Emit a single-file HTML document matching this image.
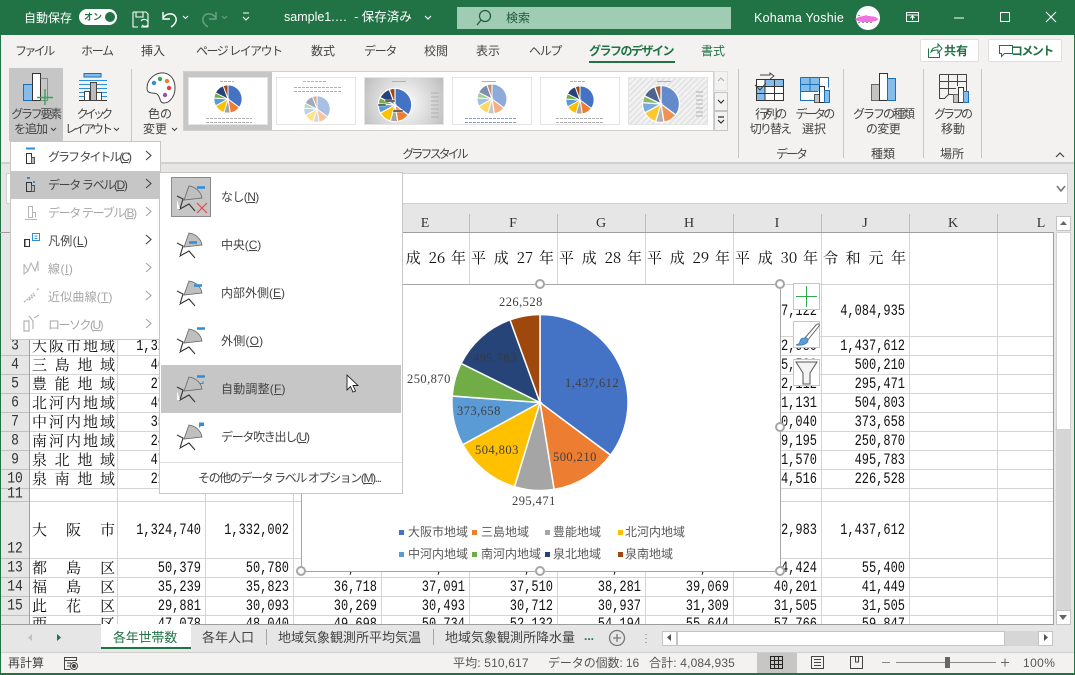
<!DOCTYPE html>
<html lang="ja"><head><meta charset="utf-8"><title>Excel</title>
<style>
html,body{margin:0;padding:0;width:1075px;height:675px;overflow:hidden;background:#e6e6e6}
body{position:relative;font-family:"Liberation Sans","Noto Sans CJK JP",sans-serif;font-size:12px;color:#444}
div,span,svg{position:absolute}
u,i,b{position:static}
.t{white-space:nowrap;line-height:16px;height:16px}
.c{transform:translateX(-50%);text-align:center}
.w{color:#fff}
.g{color:#a6a6a6}
.n{font-family:"Liberation Mono",monospace;font-size:12px;color:#111;width:84px;text-align:right;line-height:16px;height:16px;white-space:nowrap;transform:scaleY(1.32);transform-origin:50% 50%}
.j{font-family:"Noto Serif CJK SC","Noto Serif CJK JP",serif;font-size:15px;color:#111;line-height:18px;height:18px;width:83px;left:32px;text-align:justify;text-align-last:justify;white-space:nowrap;overflow:hidden}
.y{font-family:"Noto Serif CJK SC","Noto Serif CJK JP",serif;font-size:15px;color:#111;line-height:18px;height:18px;width:83px;top:249px;text-align-last:justify;white-space:nowrap}
.h{font-family:"Liberation Serif",serif;font-size:14px;color:#333;line-height:16px;height:16px;top:216px;width:88px;text-align:center}
.r{font-family:"Liberation Mono",monospace;font-size:13px;color:#333;line-height:16px;height:16px;left:1px;width:28px;text-align:center;transform:scaleY(1.2)}
.l{font-family:"Noto Sans CJK JP",sans-serif;color:#595959;font-size:12px;line-height:16px;height:16px;white-space:nowrap}
.d{font-family:"Liberation Serif",serif;font-size:12.5px;letter-spacing:.45px;color:#404040;line-height:14px;height:14px;white-space:nowrap}
.b{width:10px;height:10px;border-radius:50%;background:#fff;border:2px solid #a6a6a6;box-sizing:border-box}
.q{background:#fff;border:1px solid #c4c4c4;box-sizing:border-box}
.th{background:#fff;border:1px solid #e4e4e4;box-sizing:border-box;width:80px;height:48px;top:77px}
</style></head><body>

<!-- chrome backgrounds -->
<div style="left:0;top:0;width:1075px;height:35px;background:#217346"></div>
<div style="left:0;top:35px;width:1075px;height:127px;background:#f3f2f1"></div>
<div style="left:0;top:162px;width:1075px;height:2px;background:#d2d0ce"></div>
<div style="left:0;top:164px;width:1075px;height:50px;background:#e6e6e6"></div>
<div style="left:0;top:35px;width:1px;height:640px;background:#217346"></div>
<div style="left:1074px;top:35px;width:1px;height:640px;background:#217346"></div>
<div style="left:0;top:673px;width:1075px;height:2px;background:#217346"></div>

<!-- formula bar -->
<div style="left:6px;top:173px;width:1062px;height:31px;background:#fff;border:1px solid #d0d0d0;box-sizing:border-box"></div>
<svg style="left:1056px;top:185px" width="10" height="8"><path d="M1 1L5 6L9 1" fill="none" stroke="#777" stroke-width="1.6"/></svg>

<!-- title bar -->
<span class="t w" style="left:24px;top:10px">自動保存</span>
<div style="left:79px;top:9px;width:38px;height:16px;background:#fff;border-radius:8px"></div>
<span class="t" style="left:84px;top:9px;font-size:9px;color:#217346;font-weight:bold">オン</span>
<div style="left:105px;top:12px;width:10px;height:10px;background:#217346;border-radius:50%"></div>
<span class="t w" style="left:284px;top:9px;font-size:12.5px">sample1.…&nbsp; - 保存済み</span>
<div style="left:457px;top:7px;width:274px;height:22px;background:#a0ccb4"></div>
<span class="t" style="left:506px;top:10px;color:#1c5c3a">検索</span>
<span class="t w" style="left:754px;top:10px;font-size:12.5px;letter-spacing:.25px">Kohama Yoshie</span>
<svg style="left:0;top:0" width="1075" height="35" fill="none" stroke="#fff">
<path d="M425 16l3 3 3-3" stroke-width="1.2"/>
<!-- save -->
<path d="M133 12h13l2 2v13h-7M133 12v15h5M136 12v5h7v-5" stroke-width="1.1"/><path d="M141 21a4 4 0 0 1 7 1M148 25a4 4 0 0 1-6 0" stroke-width="1.1"/>
<!-- undo -->
<path d="M163 12v7h7M163 18c3-5 11-6 13 0 1 4-2 7-5 9" stroke-width="1.4"/><path d="M183 16l2.500 2.500 2.500-2.500" stroke-width="1.1"/>
<!-- redo -->
<path d="M216 12v7h-7M216 18c-3-5-11-6-13 0-1 4 2 7 5 9" stroke="#6ba285" stroke-width="1.4"/><path d="M222 16l2.500 2.500 2.500-2.500" stroke="#6ba285" stroke-width="1.1"/>
<!-- qat -->
<path d="M243 13h6M243 17l3 3 3-3" stroke-width="1.1"/>
<!-- search -->
<circle cx="485" cy="16" r="5.500" stroke="#1c5c3a" stroke-width="1.2"/><path d="M481 20l-4 5" stroke="#1c5c3a" stroke-width="1.3"/>
<!-- window -->
<rect x="906.500" y="12.500" width="12" height="9"/><path d="M907 15h11M912.500 20v-4M910.500 18l2-2 2 2"/>
<path d="M954 18h10"/><rect x="1000.500" y="12.500" width="9" height="9"/><path d="M1046 12l10 10M1056 12l-10 10" stroke-width="1.1"/>
<circle cx="868" cy="18" r="12" fill="#fff" stroke="none"/>
<path d="M855 19c3-2 6-3 9-3l2-1 2 1c4 0 9 1 10 3 0 2-6 3-11 3-5 0-10 0-12-3z" fill="#f070e0" stroke="none"/>
<path d="M858 15.500h4M858 22.500h16" stroke="#222" stroke-width=".6" stroke-dasharray="2 2"/>
</svg>

<!-- tabs -->
<span class="t" style="left:15px;top:43px;letter-spacing:-2.600px">ファイル</span>
<span class="t" style="left:81px;top:43px;letter-spacing:-1.300px">ホーム</span>
<span class="t" style="left:141px;top:43px">挿入</span>
<span class="t" style="left:196px;top:43px;letter-spacing:-1.500px">ページ レイアウト</span>
<span class="t" style="left:311px;top:43px">数式</span>
<span class="t" style="left:364px;top:43px;letter-spacing:-1.300px">データ</span>
<span class="t" style="left:424px;top:43px">校閲</span>
<span class="t" style="left:476px;top:43px">表示</span>
<span class="t" style="left:529px;top:43px;letter-spacing:-1.300px">ヘルプ</span>
<span class="t" style="left:589px;top:43px;color:#217346;font-weight:bold;letter-spacing:-1.500px">グラフのデザイン</span>
<div style="left:589px;top:61px;width:86px;height:2px;background:#217346"></div>
<span class="t" style="left:701px;top:43px;color:#217346">書式</span>
<div style="left:920px;top:39px;width:59px;height:23px;background:#fff;border:1px solid #e1dfdd;box-sizing:border-box;border-radius:2px"></div>
<div style="left:988px;top:39px;width:74px;height:23px;background:#fff;border:1px solid #e1dfdd;box-sizing:border-box;border-radius:2px"></div>
<span class="t" style="left:944px;top:43px;color:#217346;font-weight:bold">共有</span>
<span class="t" style="left:1011px;top:43px;color:#217346;font-weight:bold;letter-spacing:-1.600px">コメント</span>
<svg style="left:925px;top:42px" width="130" height="18" fill="none" stroke="#217346"><path d="M3.500 6.500v9h11v-5M6 10c1-4 4-5 7-5V2l4 4.500-4 4.500V8c-3 0-5 0-7 2z"/><path d="M74.500 3.500h13v8h-8l-3 3v-3h-2z"/></svg>

<!-- ribbon group lines -->
<div style="left:131px;top:69px;width:1px;height:73px;background:#c8c6c4"></div>
<div style="left:738px;top:69px;width:1px;height:89px;background:#c8c6c4"></div>
<div style="left:843px;top:69px;width:1px;height:89px;background:#c8c6c4"></div>
<div style="left:923px;top:69px;width:1px;height:89px;background:#c8c6c4"></div>
<div style="left:981px;top:69px;width:1px;height:89px;background:#c8c6c4"></div>

<div style="left:9px;top:68px;width:54px;height:73px;background:#c6c6c6"></div>
<!-- ribbon labels -->
<span class="t c" style="left:35.500px;top:106px;letter-spacing:-2.300px">グラフ要素</span>
<span class="t" style="left:14px;top:121px;letter-spacing:-1px">を追加</span>
<span class="t c" style="left:93px;top:106px;letter-spacing:-3.800px">クイック</span>
<span class="t" style="left:65px;top:121px;letter-spacing:-3px">レイアウト</span>
<span class="t c" style="left:160px;top:106px">色の</span>
<span class="t" style="left:143px;top:121px">変更</span>
<span class="t c" style="left:434px;top:146px;letter-spacing:-3px">グラフ スタイル</span>
<span class="t c" style="left:770px;top:106px;letter-spacing:-2.400px">行/列の</span>
<span class="t c" style="left:770px;top:121px;letter-spacing:-1.900px">切り替え</span>
<span class="t c" style="left:814px;top:106px;letter-spacing:-2.700px">データの</span>
<span class="t c" style="left:814px;top:121px">選択</span>
<span class="t c" style="left:883px;top:106px;letter-spacing:-2px">グラフの種類</span>
<span class="t c" style="left:883px;top:121px;letter-spacing:-.6px">の変更</span>
<span class="t c" style="left:952px;top:106px;letter-spacing:-3px">グラフの</span>
<span class="t c" style="left:953px;top:121px">移動</span>
<span class="t c" style="left:791px;top:146px;letter-spacing:-2px">データ</span>
<span class="t c" style="left:883px;top:146px">種類</span>
<span class="t c" style="left:952px;top:146px">場所</span>

<!-- gallery -->
<div style="left:183px;top:71px;width:531px;height:60px;background:#fff;border:1px solid #d2d0ce;box-sizing:border-box"></div>
<div style="left:184px;top:72px;width:88px;height:58px;background:#c6c6c6"></div>
<div class="th" style="left:188px"></div>
<div class="th" style="left:276px"></div>
<div class="th" style="left:364px;background:radial-gradient(circle at 50% 55%,#fff,#bdbdbd)"></div>
<div class="th" style="left:452px"></div>
<div class="th" style="left:540px"></div>
<div class="th" style="left:628px;background:repeating-linear-gradient(135deg,#e4e4e4 0 2px,#f3f3f3 2px 4px)"></div>
<div class="q" style="left:714px;top:71px;width:14px;height:20px;background:#f3f2f1;border-color:#e1dfdd"></div>
<div class="q" style="left:714px;top:92px;width:14px;height:19px;background:#f3f2f1"></div>
<div class="q" style="left:714px;top:111px;width:14px;height:20px;background:#f3f2f1"></div>

<svg style="left:0;top:64px" width="1075" height="100" viewBox="0 64 1075 100" fill="none">
<defs>
<g id="pie" stroke="#fff" stroke-width="6">
<path d="M0 0V-88A88 88 0 0 1 70.560 52.590Z" fill="#4472c4"/>
<path d="M0 0L70.560 52.590A88 88 0 0 1 14.100 86.900Z" fill="#ed7d31"/>
<path d="M0 0L14.100 86.900A88 88 0 0 1-25.500 84.200Z" fill="#a5a5a5"/>
<path d="M0 0L-25.500 84.200A88 88 0 0 1-77.200 42.200Z" fill="#ffc000"/>
<path d="M0 0L-77.200 42.200A88 88 0 0 1-87.800-6.500Z" fill="#5b9bd5"/>
<path d="M0 0L-87.800-6.500A88 88 0 0 1-78.900-39.100Z" fill="#70ad47"/>
<path d="M0 0L-78.900-39.100A88 88 0 0 1-30-82.700Z" fill="#264478"/>
<path d="M0 0L-30-82.700A88 88 0 0 1 0-88Z" fill="#9e480e"/>
</g>
</defs>
<!-- ribbon icons -->
<path d="M23.500 84.500h9v16h-9z" fill="#85bcec" stroke="#1a6fb5"/>
<path d="M32.500 73.500h8v27h-8z" fill="#fff" stroke="#333"/>
<path d="M40.500 78.500h7v22h-7" stroke="#888"/>
<path d="M37 97.500h16M45 89v16" stroke="#33a852" stroke-width="1.400"/>
<path d="M84 73.500h17v3.500h-17z" fill="#85bcec" stroke="#1a6fb5"/>
<path d="M79 80.500h28M79 84.500h28M79 88.500h28M79 92.500h28M79 96.500h28" stroke="#2e8fd8"/>
<path d="M79 100.500h28" stroke="#333"/><path d="M84.500 91.500h5v9h-5z" fill="#fff" stroke="#444"/><path d="M90.500 82.500h6v18h-6z" fill="#bbb" stroke="#444"/><path d="M96.500 92.500h5v8h-5z" fill="#fff" stroke="#444"/>
<path d="M147 88c0-10 10-16 17-15 7 1 11 7 11 15 0 8-5 15-11 15-5 0-3-6-7-9-3-2-10 1-10-6z" fill="#fff" stroke="#444"/>
<circle cx="154" cy="83" r="2.200" fill="#2e8fd8"/><circle cx="160" cy="79" r="2.200" fill="#33a852"/><circle cx="167" cy="81" r="2.200" fill="#ed7d31"/><circle cx="169" cy="88" r="2.200" fill="#e04040"/><circle cx="165" cy="95" r="2.200" fill="#9a4fa8"/>
<!-- data icons -->
<path d="M756.500 79.500h27v21h-27z" fill="#fff"/><path d="M756.500 86.500h8v7h-8zM756.500 93.500h8v7h-8zM764.500 79.500h19v7h-19z" fill="#85bcec"/>
<path d="M756.500 79.500h27v21h-27zM756 86.500h28M756 93.500h28M765 79v22M774.500 79v22" stroke="#333"/>
<path d="M755 85l5 5 6-7M760 75h10v-2l4 3-4 3" stroke="#444"/>
<path d="M800.500 77.500h28v14h-10v9h-18z" fill="#fff"/><path d="M800.500 77.500h19v14h-19z" fill="#85bcec"/>
<path d="M800.500 77.500h28v10M800.500 77.500v23h18M800 84.500h20M800 91.500h18M810 77v14M819.500 77v9" stroke="#1a6fb5"/>
<path d="M814.500 94.500h6v8h-6z" fill="#c4c4c4" stroke="#555"/><path d="M819.500 86.500h5v16h-5z" fill="#fff" stroke="#333"/><path d="M824.500 90.500h5v12h-5z" fill="#85bcec" stroke="#1a6fb5"/>
<path d="M871.500 84.500h8v16h-8z" fill="#c4c4c4" stroke="#666"/><path d="M879.500 73.500h8v27h-8z" fill="#fff" stroke="#333"/><path d="M887.500 78.500h8v22h-8z" fill="#85bcec" stroke="#1a6fb5"/>
<path d="M939.500 74.500h27v20h-10M939.500 74.500v24h5l4-4h6M939 81.500h27M939 88.500h17M948.500 74v20M957.500 74v12" stroke="#444"/>
<path d="M953.500 94.500h6v8h-6z" fill="#c4c4c4" stroke="#666"/><path d="M958.500 87.500h5v15h-5z" fill="#fff" stroke="#333"/><path d="M963.500 91.500h5v11h-5z" fill="#85bcec" stroke="#1a6fb5"/>
<!-- carets -->
<path d="M51 128l2.500 2.500 2.500-2.500M114 128l2.500 2.500 2.500-2.500M172 128l2.500 2.500 2.500-2.500" stroke="#444"/>
<path d="M718 81l3-3 3 3" stroke="#b0b0b0" stroke-width="1.200"/><path d="M718 100l3 3 3-3" stroke="#333" stroke-width="1.200"/><path d="M718 117h6M718 120l3 3 3-3" stroke="#333" stroke-width="1.200"/>
<path d="M1056 157l4-4 4 4" stroke="#444" stroke-width="1.200"/>
<!-- thumbnails -->
<use href="#pie" transform="translate(228,99) scale(.16)"/>
<use href="#pie" transform="translate(317,109) scale(.15)"/><circle cx="317" cy="109" r="13.500" fill="#fff" opacity=".55"/>
<use href="#pie" transform="translate(395,105) scale(.19)"/>
<use href="#pie" transform="translate(492,99) scale(.17)" opacity=".6"/>
<use href="#pie" transform="translate(580,100) scale(.16)"/>
<use href="#pie" transform="translate(661,104) scale(.21)" opacity=".8"/>
<g stroke="#b0b0b0" stroke-width="1">
<path d="M220 81.500h14M206 118.500h46M206 122.500h46" stroke-dasharray="3 1"/>
<path d="M303 81.500h24M294 87.500h48M294 91.500h48" stroke-dasharray="3 1"/>
<path d="M392 81.500h14M431 93h8M431 97h8M431 101h8M431 105h8M431 109h8M431 113h8M431 117h8"/>
<path d="M482 81.500h14"/><path d="M465 118.500h52M465 122.500h52" stroke="#8a9ac0" stroke-dasharray="3 1"/>
<path d="M570 81.500h16M556 118.500h48M556 122.500h48" stroke-dasharray="3 1"/>
<path d="M657 81.500h14M696 92h7M696 96h7M696 100h7M696 104h7M696 108h7M696 112h7M696 116h7"/>
</g>
<path d="M385 100h10v2h-10zM393 110h10v2h-10zM378 104h8v2h-8z" fill="#333" stroke="#fff" stroke-width=".5"/>
</svg>

<!-- column headers -->
<div style="left:1px;top:214px;width:1052px;height:19px;background:#e6e6e6"></div>
<span class="h" style="left:381px">E</span><span class="h" style="left:469px">F</span><span class="h" style="left:557px">G</span><span class="h" style="left:645px">H</span><span class="h" style="left:733px">I</span><span class="h" style="left:821px">J</span><span class="h" style="left:909px">K</span><span class="h" style="left:997px">L</span>

<!-- sheet -->
<div style="left:30px;top:233px;width:1023px;height:391px;background:#fff"></div>
<div style="left:1px;top:233px;width:29px;height:391px;background:#e6e6e6"></div>
<svg style="left:0;top:214px" width="1075" height="411" viewBox="0 214 1075 411" fill="none">
<path d="M117.500 233V624M205.500 233V624M293.500 233V624M381.500 233V624M469.500 233V624M557.500 233V624M645.500 233V624M733.500 233V624M821.500 233V624M909.500 233V624M997.500 233V624M30 284.500H1053M30 336.500H1053M30 355.500H1053M30 374.500H1053M30 393.500H1053M30 412.500H1053M30 431.500H1053M30 450.500H1053M30 469.500H1053M30 488.500H1053M30 501.500H1053M30 558.500H1053M30 577.500H1053M30 596.500H1053M30 615.500H1053" stroke="#d4d4d4"/>
<path d="M1 355.500H29M1 374.500H29M1 393.500H29M1 412.500H29M1 431.500H29M1 450.500H29M1 469.500H29M1 488.500H29M1 501.500H29M1 558.500H29M1 577.500H29M1 596.500H29M1 615.500H29" stroke="#c0c0c0"/>
<path d="M381.500 214V232M469.500 214V232M557.500 214V232M645.500 214V232M733.500 214V232M821.500 214V232M909.500 214V232M997.500 214V232" stroke="#bdbdbd"/>
<path d="M0 232.500H1053.500V624M29.500 232V624M1 624.500H1054" stroke="#9e9e9e"/>
</svg>
<span class="y" style="left:383px">平 成 26 年</span><span class="y" style="left:471px">平 成 27 年</span><span class="y" style="left:559px">平 成 28 年</span><span class="y" style="left:647px">平 成 29 年</span><span class="y" style="left:735px">平 成 30 年</span><span class="y" style="left:823px">令 和 元 年</span>

<span class="r" style="top:338px">3</span><span class="r" style="top:357px">4</span><span class="r" style="top:376px">5</span><span class="r" style="top:395px">6</span><span class="r" style="top:414px">7</span><span class="r" style="top:433px">8</span><span class="r" style="top:452px">9</span><span class="r" style="top:471px">10</span>
<span class="r" style="top:487px;height:14px;line-height:14px;overflow:hidden">11</span><span class="r" style="top:541px">12</span><span class="r" style="top:560px">13</span><span class="r" style="top:579px">14</span><span class="r" style="top:598px">15</span>

<span class="j" style="top:337px">大阪市地域</span><span class="j" style="top:356px">三 島 地 域</span><span class="j" style="top:375px">豊 能 地 域</span><span class="j" style="top:394px">北河内地域</span><span class="j" style="top:413px">中河内地域</span><span class="j" style="top:432px">南河内地域</span><span class="j" style="top:451px">泉 北 地 域</span><span class="j" style="top:470px">泉 南 地 域</span>
<span class="j" style="top:521px">大 阪 市</span><span class="j" style="top:559px">都 島 区</span><span class="j" style="top:578px">福 島 区</span><span class="j" style="top:597px">此 花 区</span>

<span class="n" style="left:117px;top:338px">1,324,740</span><span class="n" style="left:117px;top:357px">464,000</span><span class="n" style="left:117px;top:376px">275,000</span><span class="n" style="left:117px;top:395px">495,000</span><span class="n" style="left:117px;top:414px">358,000</span><span class="n" style="left:117px;top:433px">244,000</span><span class="n" style="left:117px;top:452px">472,000</span><span class="n" style="left:117px;top:471px">218,000</span>
<span class="n" style="left:117px;top:522px">1,324,740</span><span class="n" style="left:205px;top:522px">1,332,002</span>
<span class="n" style="left:117px;top:560px">50,379</span><span class="n" style="left:205px;top:560px">50,780</span><span class="n" style="left:293px;top:560px">51,065</span><span class="n" style="left:381px;top:560px">51,278</span><span class="n" style="left:469px;top:560px">51,903</span><span class="n" style="left:557px;top:560px">52,711</span><span class="n" style="left:645px;top:560px">53,756</span><span class="n" style="left:733px;top:560px">54,424</span><span class="n" style="left:821px;top:560px">55,400</span>
<span class="n" style="left:117px;top:579px">35,239</span><span class="n" style="left:205px;top:579px">35,823</span><span class="n" style="left:293px;top:579px">36,718</span><span class="n" style="left:381px;top:579px">37,091</span><span class="n" style="left:469px;top:579px">37,510</span><span class="n" style="left:557px;top:579px">38,281</span><span class="n" style="left:645px;top:579px">39,069</span><span class="n" style="left:733px;top:579px">40,201</span><span class="n" style="left:821px;top:579px">41,449</span>
<span class="n" style="left:117px;top:598px">29,881</span><span class="n" style="left:205px;top:598px">30,093</span><span class="n" style="left:293px;top:598px">30,269</span><span class="n" style="left:381px;top:598px">30,493</span><span class="n" style="left:469px;top:598px">30,712</span><span class="n" style="left:557px;top:598px">30,937</span><span class="n" style="left:645px;top:598px">31,309</span><span class="n" style="left:733px;top:598px">31,505</span><span class="n" style="left:821px;top:598px">31,505</span>
<span class="n" style="left:733px;top:303px">3,977,122</span><span class="n" style="left:821px;top:303px">4,084,935</span>
<span class="n" style="left:733px;top:338px">1,422,980</span><span class="n" style="left:821px;top:338px">1,437,612</span>
<span class="n" style="left:733px;top:357px">495,530</span><span class="n" style="left:821px;top:357px">500,210</span>
<span class="n" style="left:733px;top:376px">292,112</span><span class="n" style="left:821px;top:376px">295,471</span>
<span class="n" style="left:733px;top:395px">501,131</span><span class="n" style="left:821px;top:395px">504,803</span>
<span class="n" style="left:733px;top:414px">370,040</span><span class="n" style="left:821px;top:414px">373,658</span>
<span class="n" style="left:733px;top:433px">249,195</span><span class="n" style="left:821px;top:433px">250,870</span>
<span class="n" style="left:733px;top:452px">491,570</span><span class="n" style="left:821px;top:452px">495,783</span>
<span class="n" style="left:733px;top:471px">224,516</span><span class="n" style="left:821px;top:471px">226,528</span>
<span class="n" style="left:733px;top:522px">1,422,983</span><span class="n" style="left:821px;top:522px">1,437,612</span>

<!-- partial row 16 -->
<div style="left:1px;top:616px;width:1052px;height:8px;overflow:hidden">
<span class="j" style="top:-1px;left:31px">西 　 区</span>
<span class="n" style="left:116px;top:0">47,078</span><span class="n" style="left:204px;top:0">48,040</span><span class="n" style="left:292px;top:0">49,698</span><span class="n" style="left:380px;top:0">50,734</span><span class="n" style="left:468px;top:0">52,132</span><span class="n" style="left:556px;top:0">54,194</span><span class="n" style="left:644px;top:0">55,644</span><span class="n" style="left:732px;top:0">57,766</span><span class="n" style="left:820px;top:0">59,847</span>
</div>

<!-- v scrollbar -->
<div style="left:1054px;top:214px;width:20px;height:411px;background:#e6e6e6"></div>
<div style="left:1056px;top:232px;width:15px;height:198px;background:#fff;border:1px solid #d0d0d0;box-sizing:border-box"></div>
<div style="left:1056px;top:430px;width:15px;height:180px;background:#d6d6d6"></div>
<div class="q" style="left:1056px;top:216px;width:15px;height:15px"></div>
<div class="q" style="left:1056px;top:610px;width:15px;height:15px"></div>
<svg style="left:1056px;top:216px" width="15" height="409"><path d="M4 9l3.500-4 3.500 4zM3 399h8l-4 5z" fill="#666"/></svg>

<!-- chart -->
<div style="left:301px;top:284px;width:480px;height:288px;background:#fff;border:1px solid #a6a6a6;box-sizing:border-box"></div>
<svg style="left:440px;top:302px" width="200" height="200" viewBox="-100 -100.500 200 200">
<g stroke="#fff" stroke-width="1.500">
<path d="M0 0V-88A88 88 0 0 1 70.560 52.590Z" fill="#4472c4"/>
<path d="M0 0L70.560 52.590A88 88 0 0 1 14.100 86.900Z" fill="#ed7d31"/>
<path d="M0 0L14.100 86.900A88 88 0 0 1-25.500 84.200Z" fill="#a5a5a5"/>
<path d="M0 0L-25.500 84.200A88 88 0 0 1-77.200 42.200Z" fill="#ffc000"/>
<path d="M0 0L-77.200 42.200A88 88 0 0 1-87.800-6.500Z" fill="#5b9bd5"/>
<path d="M0 0L-87.800-6.500A88 88 0 0 1-78.900-39.100Z" fill="#70ad47"/>
<path d="M0 0L-78.900-39.100A88 88 0 0 1-30-82.700Z" fill="#264478"/>
<path d="M0 0L-30-82.700A88 88 0 0 1 0-88Z" fill="#9e480e"/>
</g></svg>
<span class="d" style="left:499px;top:295px">226,528</span>
<span class="d" style="left:565px;top:376px">1,437,612</span>
<span class="d" style="left:473px;top:351px;color:#3a3a3a">495,783</span>
<span class="d" style="left:407px;top:372px">250,870</span>
<span class="d" style="left:457px;top:404px">373,658</span>
<span class="d" style="left:475px;top:443px">504,803</span>
<span class="d" style="left:553px;top:450px">500,210</span>
<span class="d" style="left:512px;top:494px">295,471</span>
<div style="left:399px;top:530px;width:5px;height:5px;background:#4472c4"></div><span class="l" style="left:408px;top:524px">大阪市地域</span>
<div style="left:472px;top:530px;width:5px;height:5px;background:#ed7d31"></div><span class="l" style="left:481px;top:524px">三島地域</span>
<div style="left:545px;top:530px;width:5px;height:5px;background:#a5a5a5"></div><span class="l" style="left:553px;top:524px">豊能地域</span>
<div style="left:618px;top:530px;width:5px;height:5px;background:#ffc000"></div><span class="l" style="left:625px;top:524px">北河内地域</span>
<div style="left:399px;top:552px;width:5px;height:5px;background:#5b9bd5"></div><span class="l" style="left:408px;top:546px">中河内地域</span>
<div style="left:472px;top:552px;width:5px;height:5px;background:#70ad47"></div><span class="l" style="left:481px;top:546px">南河内地域</span>
<div style="left:545px;top:552px;width:5px;height:5px;background:#264478"></div><span class="l" style="left:553px;top:546px">泉北地域</span>
<div style="left:618px;top:552px;width:5px;height:5px;background:#9e480e"></div><span class="l" style="left:625px;top:546px">泉南地域</span>
<div class="b" style="left:535px;top:279px"></div><div class="b" style="left:775px;top:279px"></div><div class="b" style="left:775px;top:422px"></div><div class="b" style="left:296px;top:566px"></div><div class="b" style="left:535px;top:566px"></div><div class="b" style="left:775px;top:566px"></div>
<div class="q" style="left:793px;top:283px;width:27px;height:27px"></div>
<div class="q" style="left:793px;top:321px;width:27px;height:27px"></div>
<div class="q" style="left:793px;top:359px;width:27px;height:27px"></div>
<svg style="left:793px;top:283px" width="27" height="103" fill="none"><path d="M3 13.500h21M13.500 3v21" stroke="#33a852"/>
<path d="M11 56L23 42c2-2 4-1 3 1L14 58z" fill="#fff" stroke="#666"/><path d="M11 55c3-1 4 1 4 3-1 3-6 5-12 4 3-1 4-2 4-4 0-2 2-3 4-3z" fill="#5b9bd5" stroke="#2e75b6" stroke-width=".7"/>
<path d="M3 80h21l-7 11v11h-7V91z" fill="#f3f3f3" stroke="#555" transform="translate(0,-1)"/></svg>

<!-- sheet tabs -->
<div style="left:1px;top:625px;width:1073px;height:27px;background:#e6e6e6"></div>
<div style="left:101px;top:624px;width:90px;height:25px;background:#fff;border-bottom:2px solid #217346;box-sizing:border-box"></div>
<span class="t" style="left:113px;top:630px;color:#217346;font-size:13px;letter-spacing:-.2px">各年世帯数</span>
<span class="t" style="left:202px;top:630px;font-size:13px">各年人口</span>
<div style="left:266px;top:629px;width:1px;height:16px;background:#a6a6a6"></div>
<span class="t" style="left:278px;top:630px;font-size:13px">地域気象観測所平均気温</span>
<div style="left:433px;top:629px;width:1px;height:16px;background:#a6a6a6"></div>
<span class="t" style="left:445px;top:630px;font-size:13px">地域気象観測所降水量</span>
<div style="left:576px;top:625px;width:8px;height:24px;background:#e6e6e6"></div>
<span class="t" style="left:584px;top:628px;color:#217346;font-weight:bold">...</span>
<div style="left:662px;top:631px;width:391px;height:15px;background:#d6d6d6"></div>
<div class="q" style="left:662px;top:631px;width:15px;height:15px"></div>
<div class="q" style="left:677px;top:631px;width:328px;height:15px"></div>
<div class="q" style="left:1038px;top:631px;width:15px;height:15px"></div>
<svg style="left:0;top:625px" width="1075" height="27" fill="none"><path d="M32 9v7l-4-3.500z" fill="#c0c0c0"/><path d="M57 9v7l4-3.500z" fill="#217346"/>
<circle cx="617" cy="13" r="7.500" stroke="#777" stroke-width="1.300"/><path d="M613 13h8M617 9v8" stroke="#777" stroke-width="1.300"/>
<path d="M646 9v1M646 13v1M646 17v1" stroke="#aaa" stroke-width="2"/>
<path d="M671 9v7l-4-3.500zM1044 9v7l4-3.500z" fill="#555"/></svg>

<!-- status bar -->
<div style="left:1px;top:652px;width:1073px;height:21px;background:#f3f2f1;border-top:1px solid #d2d0ce;box-sizing:border-box"></div>
<div style="left:757px;top:653px;width:40px;height:20px;background:#c8c6c4"></div>
<span class="t" style="left:8px;top:655px">再計算</span>
<span class="t" style="left:453px;top:655px;letter-spacing:.15px;color:#555">平均: 510,617</span>
<span class="t" style="left:548px;top:655px;letter-spacing:-.1px;color:#555">データの個数: 16</span>
<span class="t" style="left:649px;top:655px;letter-spacing:.15px;color:#555">合計: 4,084,935</span>
<span class="t" style="left:1023px;top:655px;letter-spacing:.4px;color:#555">100%</span>
<svg style="left:0;top:652px" width="1075" height="21" fill="none" stroke="#444">
<path d="M64.500 5.500h12v3h-12zM64.500 8.500v9h6M67 11h4M67 14h3"/><circle cx="74" cy="14" r="3.500"/><circle cx="74" cy="14" r="1.500" fill="#444"/>
<path d="M770.500 4.500h12v12h-12zM774.500 4v13M778.500 4v13M770 8.500h13M770 12.500h13" stroke="#222"/>
<path d="M811.500 4.500h12v12h-12zM814 7.500h7M814 10.500h7M814 13.500h7"/>
<path d="M850.500 4.500h12v12h-12zM855.500 4v6h3V4"/>
<path d="M882 10.500h8M896 10.500h100" stroke="#888"/><path d="M1001 10.500h8M1005 6.500v8" stroke="#666"/>
<rect x="945" y="5" width="5" height="11" fill="#666" stroke="none"/>
</svg>

<!-- menu 1 -->
<div style="left:10px;top:141px;width:151px;height:199px;background:#fff;border:1px solid #c8c6c4;box-sizing:border-box"></div>
<div style="left:11px;top:171px;width:149px;height:28px;background:#c6c6c6"></div>
<span class="t" style="left:48px;top:149px;letter-spacing:-2px">グラフ タイトル(<u>C</u>)</span>
<span class="t" style="left:48px;top:177px;letter-spacing:-1.350px">データ ラベル(<u>D</u>)</span>
<span class="t g" style="left:48px;top:205px;letter-spacing:-1.350px">データ テーブル(<u>B</u>)</span>
<span class="t" style="left:48px;top:233px;letter-spacing:.3px">凡例(<u>L</u>)</span>
<span class="t g" style="left:48px;top:261px;letter-spacing:.5px">線(<u>I</u>)</span>
<span class="t g" style="left:48px;top:289px;letter-spacing:.2px">近似曲線(<u>T</u>)</span>
<span class="t g" style="left:48px;top:317px;letter-spacing:-1.500px">ローソク(<u>U</u>)</span>
<svg style="left:0;top:140px" width="165" height="200" fill="none">
<path d="M146 11l5 4.500-5 4.500M146 39l5 4.500-5 4.500M146 95l5 4.500-5 4.500" stroke="#444" stroke-width="1.100"/>
<path d="M146 67l5 4.500-5 4.500M146 123l5 4.500-5 4.500M146 151l5 4.500-5 4.500M146 179l5 4.500-5 4.500" stroke="#a6a6a6" stroke-width="1.100"/>
<path d="M26 8.500h9" stroke="#2e8fd8" stroke-width="2"/><path d="M26.500 13.500h5v10h-5z" stroke="#333"/><path d="M31.500 17.500h3v6h-3z" fill="#bbb" stroke="#555"/>
<path d="M26.500 42.500h5v9h-5z" stroke="#333"/><path d="M31.500 45.500h3v6h-3z" fill="#bbb" stroke="#555"/><path d="M27 38h3M33 42h2" stroke="#2e8fd8" stroke-width="2"/>
<path d="M28.500 66.500h4v11h-4zM32.500 72.500h3v5M25 79.500h12" stroke="#b5b5b5"/>
<path d="M24.500 99.500h5v7h-5z" stroke="#333"/><path d="M25 100v6" stroke="#333"/><path d="M32.500 93.500h7v7h-7z" stroke="#2e8fd8"/><path d="M34.500 96h3M34.500 98.500h3" stroke="#2e8fd8"/>
<path d="M24 124v10l4-3 3-8 4 8 3-10v10M24 124l4 7" stroke="#b5b5b5" stroke-width="1.100"/>
<path d="M24 162l4-3 3-3 3-3M29 160l6-5M37 150l2-2" stroke="#b5b5b5" stroke-width="1.500" stroke-dasharray="2 1"/>
<path d="M24 181h5v10h-5zM29 176l4 5v8M34 178l5-3" stroke="#b5b5b5" stroke-width="1.200"/>
</svg>

<!-- menu 2 -->
<div style="left:159px;top:172px;width:244px;height:322px;background:#fff;border:1px solid #c8c6c4;box-sizing:border-box"></div>
<div style="left:161px;top:365px;width:240px;height:48px;background:#c6c6c6"></div>
<div style="left:171px;top:177px;width:40px;height:40px;background:#c6c6c6;border:1px solid #8a8a8a;box-sizing:border-box"></div>
<div style="left:160px;top:462px;width:242px;height:1px;background:#e1dfdd"></div>
<span class="t" style="left:221px;top:189px;letter-spacing:-.6px">なし(<u>N</u>)</span>
<span class="t" style="left:221px;top:237px;letter-spacing:-.1px">中央(<u>C</u>)</span>
<span class="t" style="left:221px;top:285px">内部外側(<u>E</u>)</span>
<span class="t" style="left:221px;top:333px;letter-spacing:.2px">外側(<u>O</u>)</span>
<span class="t" style="left:221px;top:381px;letter-spacing:.2px">自動調整(<u>F</u>)</span>
<span class="t" style="left:221px;top:429px;letter-spacing:-1.300px">データ吹き出し(<u>U</u>)</span>
<span class="t" style="left:198px;top:470px;letter-spacing:-1.400px">その他のデータ ラベル オプション(<u>M</u>)...</span>
<svg style="left:160px;top:172px" width="242" height="322" fill="none">
<defs><g id="ic"><path d="M7 14L12 0C19 1 24 6 25 12Z" fill="#bfbfbf" stroke="#666" stroke-width=".8"/><path d="M0 10L6 13 3 23 12 18 18 25" stroke="#333" stroke-width="1.100"/><path d="M0 14l3 9H0z" fill="#fff"/></g></defs>
<use href="#ic" transform="translate(17,14)"/><path d="M37 15.500h8" stroke="#2e8fd8" stroke-width="2.500"/><path d="M37 31l10 10M47 31L37 41" stroke="#e04848" stroke-width="1.200"/>
<use href="#ic" transform="translate(17,61)"/><path d="M29 70.500h8" stroke="#2e8fd8" stroke-width="2.500"/>
<use href="#ic" transform="translate(17,109)"/><path d="M34 113.500h8" stroke="#2e8fd8" stroke-width="2.500"/>
<use href="#ic" transform="translate(17,157)"/><path d="M37 156.500h8" stroke="#2e8fd8" stroke-width="2.500"/>
<use href="#ic" transform="translate(17,205)"/><path d="M37 204.500h8" stroke="#2e8fd8" stroke-width="2.500"/><path d="M43 209v2.500h-3" stroke="#2e8fd8"/>
<use href="#ic" transform="translate(17,253)"/><path d="M39 250.500h5v3.500h-3l-2 2z" fill="#2e8fd8"/>
<path d="M187 203v15l3.500-3.500 2.500 5.500 2.500-1-2.500-5.500h5z" fill="#fff" stroke="#222" stroke-width=".9"/>
</svg>
</body></html>
